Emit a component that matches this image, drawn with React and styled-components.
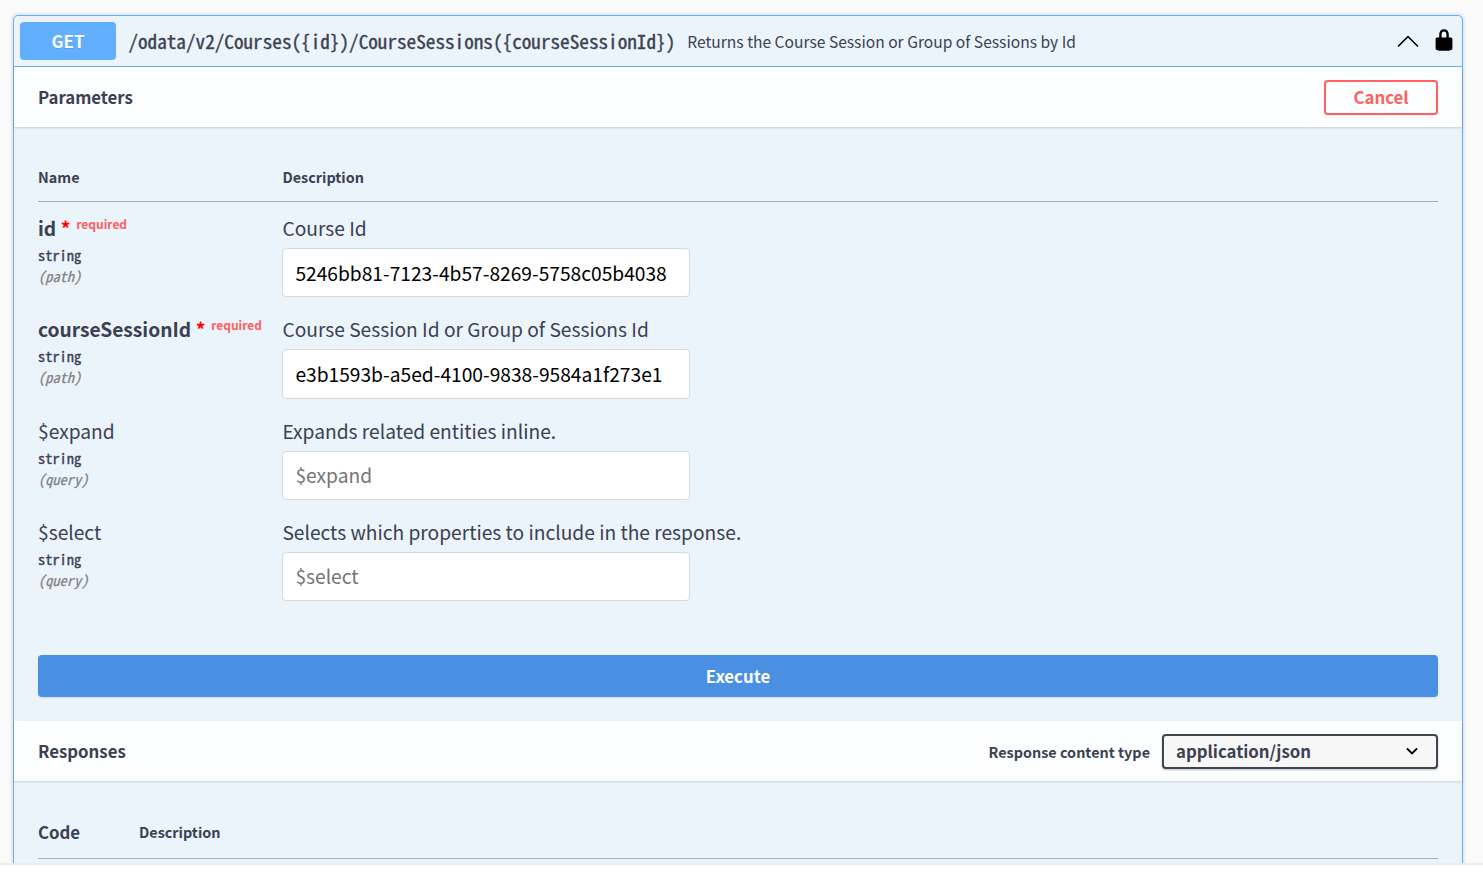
import React from 'react';
import styled, { createGlobalStyle } from 'styled-components';

const sans = `"Noto Sans CJK JP", "Open Sans", sans-serif`;
const mono = `"Noto Sans Mono CJK JP", "Noto Sans CJK JP", monospace`;

const Global = createGlobalStyle`
  *, *::before, *::after { box-sizing: border-box; }
  html { background: #fff; }
  body { margin: 0; overflow: hidden; font-family: ${sans}; color: #3b4151; }
`;

const Page = styled.main`
  height: 865px;
  padding: 15px 20px 0 13px;
  background: #fafafa;
  border-bottom: 2px solid #ededed;
  overflow: hidden;
`;

const Operation = styled.section`
  width: 1450px;
  height: 900px;
  border: 1px solid #61affe;
  border-radius: 5px;
  background: #ebf3fb;
  box-shadow: 0 0 4px rgba(0, 0, 0, 0.19);
`;

const Summary = styled.header`
  display: flex;
  align-items: center;
  height: 51px;
  padding: 0 6px;
  border-bottom: 1px solid #61affe;
`;

const Method = styled.span`
  width: 96px;
  height: 38px;
  border-radius: 4px;
  background: #61affe;
  color: #fff;
  font: 700 16.8px/38px ${sans};
  text-align: center;
  text-shadow: 0 1px 0 rgba(0, 0, 0, 0.1);
`;

const Path = styled.span`
  margin-left: 12.4px;
  font: 400 19.2px/28px ${mono};
  -webkit-text-stroke: 0.35px currentColor;
  white-space: nowrap;
`;

const SummaryText = styled.span`
  flex: 1;
  margin-left: 12px;
  font: 400 15.6px/24px ${sans};
`;

const Chevron = styled.svg`
  width: 24px;
  height: 24px;
`;

const Lock = styled.svg`
  width: 24px;
  height: 24px;
  margin: 0 0 2px 12px;
`;

const SectionHeader = styled.div`
  display: flex;
  align-items: center;
  height: 60px;
  padding: 0 24px;
  background: rgba(255, 255, 255, 0.85);
  box-shadow: 0 1px 2px rgba(0, 0, 0, 0.15);
`;

const SectionTitle = styled.h4`
  flex: 1;
  margin: 0;
  font: 700 16.8px/24px ${sans};
`;

const CancelButton = styled.button`
  width: 114px;
  height: 35px;
  padding: 0;
  border: 2px solid #ff6060;
  border-radius: 4px;
  background: transparent;
  color: #ff6060;
  font: 700 16.8px/30px ${sans};
  box-shadow: 0 1px 2px rgba(0, 0, 0, 0.1);
`;

const Body = styled.div`
  padding: 0 24px;
`;

const HeadRow = styled.div`
  display: grid;
  grid-template-columns: ${(p) => p.$first}px 1fr;
  align-items: center;
  height: ${(p) => p.$height}px;
  padding-top: ${(p) => p.$top}px;
  border-bottom: 1px solid #a5afba;
  font: 700 14.4px/20px ${sans};
`;

const CodeHead = styled.span`
  font-size: 16.8px;
`;

const ParamRow = styled.div`
  display: grid;
  grid-template-columns: 244.4px 1fr;
  height: ${(p) => p.$height}px;
  padding-top: 11px;
`;

const ParamName = styled.div`
  height: 30px;
  font: ${(p) => (p.$required ? 700 : 400)} 19.2px/30px ${sans};
  white-space: nowrap;
`;

const Star = styled.span`
  margin-left: 4.500px;
  color: red;
`;

const Required = styled.span`
  position: relative;
  top: -7px;
  margin-left: 5.8px;
  color: #ff6060;
  font-size: 12px;
  line-height: 1;
`;

const ParamType = styled.div`
  padding-top: 1px;
  font: 400 14.4px/22px ${mono};
  -webkit-text-stroke: 0.35px currentColor;
`;

const ParamIn = styled.div`
  color: #808080;
  font: italic 400 14.4px/20px ${mono};
  -webkit-text-stroke: 0.2px currentColor;
`;

const ParamDescription = styled.div`
  font: 400 19.2px/30px ${sans};
`;

const Field = styled.input`
  display: block;
  width: 408px;
  height: ${(p) => p.$height}px;
  margin: 5px 0 0 -0.4px;
  padding: 0 12.4px;
  border: 1px solid #d9d9d9;
  border-radius: 4px;
  background: #fff;
  color: #000;
  font: 400 19.2px ${sans};
  &:placeholder-shown { padding-bottom: 2px; }
  &::placeholder { color: #757575; opacity: 1; }
`;

const ExecuteButton = styled.button`
  display: block;
  width: 100%;
  height: 42px;
  margin: 48px 0 24px;
  padding: 0;
  border: 0;
  border-radius: 4px;
  background: #4990e2;
  color: #fff;
  font: 700 16.8px/42px ${sans};
  box-shadow: 0 1px 2px rgba(0, 0, 0, 0.1);
`;

const TypeLabel = styled.span`
  margin-right: 12px;
  padding-top: 2px;
  font: 700 14.4px/20px ${sans};
`;

const TypeSelect = styled.div`
  display: flex;
  align-items: center;
  justify-content: space-between;
  width: 276px;
  height: 35px;
  padding: 0 16px 0 12px;
  border: 2px solid #41444e;
  border-radius: 4px;
  background: #f7f7f7;
  font: 700 16.8px/30px ${sans};
  box-shadow: 0 1px 2px rgba(0, 0, 0, 0.25);
`;

const params = [
  { name: 'id', required: true, where: 'path', text: 'Course Id', value: '5246bb81-7123-4b57-8269-5758c05b4038', height: 101, field: 49 },
  { name: 'courseSessionId', required: true, where: 'path', text: 'Course Session Id or Group of Sessions Id', value: 'e3b1593b-a5ed-4100-9838-9584a1f273e1', height: 102, field: 50 },
  { name: '$expand', where: 'query', text: 'Expands related entities inline.', height: 101, field: 49 },
  { name: '$select', where: 'query', text: 'Selects which properties to include in the response.', height: 101, field: 49 },
];

function Param({ name, required, where, text, value, height, field }) {
  return (
    <ParamRow $height={height}>
      <div>
        <ParamName $required={required}>
          {name}
          {required && <Star>*</Star>}
          {required && <Required>required</Required>}
        </ParamName>
        <ParamType>string</ParamType>
        <ParamIn>({where})</ParamIn>
      </div>
      <div>
        <ParamDescription>{text}</ParamDescription>
        <Field $height={field} defaultValue={value} placeholder={name} />
      </div>
    </ParamRow>
  );
}

export default function App() {
  return (
    <>
      <Global />
      <Page>
        <Operation>
          <Summary>
            <Method>GET</Method>
            <Path>{'/odata/v2/Courses({id})/CourseSessions({courseSessionId})'}</Path>
            <SummaryText>Returns the Course Session or Group of Sessions by Id</SummaryText>
            <Chevron viewBox="0 0 24 24" fill="none" stroke="#000" strokeWidth="1.6" strokeLinecap="round" strokeLinejoin="round">
              <path d="M2.500 17 12 7.500 21.500 17" />
            </Chevron>
            <Lock viewBox="0 0 20 20">
              <path d="M15.8 8H14V5.600C14 2.703 12.665 1 10 1 7.334 1 6 2.703 6 5.600V8H4c-.553 0-1 .646-1 1.199V17c0 .549.428 1.139.951 1.307l1.197.387C5.672 18.861 6.550 19 7.100 19h5.800c.549 0 1.428-.139 1.951-.307l1.196-.387c.524-.167.953-.757.953-1.306V9.199C17 8.646 16.352 8 15.800 8zM12 8H8V5.199C8 3.754 8.797 3 10 3c1.203 0 2 .754 2 2.199V8z" />
            </Lock>
          </Summary>

          <SectionHeader>
            <SectionTitle>Parameters</SectionTitle>
            <CancelButton>Cancel</CancelButton>
          </SectionHeader>
          <Body>
            <HeadRow $first={244.4} $height={75} $top={26}>
              <span>Name</span>
              <span>Description</span>
            </HeadRow>
            {params.map((p) => (
              <Param key={p.name} {...p} />
            ))}
            <ExecuteButton>Execute</ExecuteButton>
          </Body>

          <SectionHeader>
            <SectionTitle>Responses</SectionTitle>
            <TypeLabel>Response content type</TypeLabel>
            <TypeSelect>
              application/json
              <svg width="16" height="16" viewBox="0 0 16 16" fill="none" stroke="#000" strokeWidth="1.8">
                <path d="M3 5.500 8 10.500 13 5.500" />
              </svg>
            </TypeSelect>
          </SectionHeader>
          <Body>
            <HeadRow $first={101} $height={78} $top={24}>
              <CodeHead>Code</CodeHead>
              <span>Description</span>
            </HeadRow>
          </Body>
        </Operation>
      </Page>
    </>
  );
}
